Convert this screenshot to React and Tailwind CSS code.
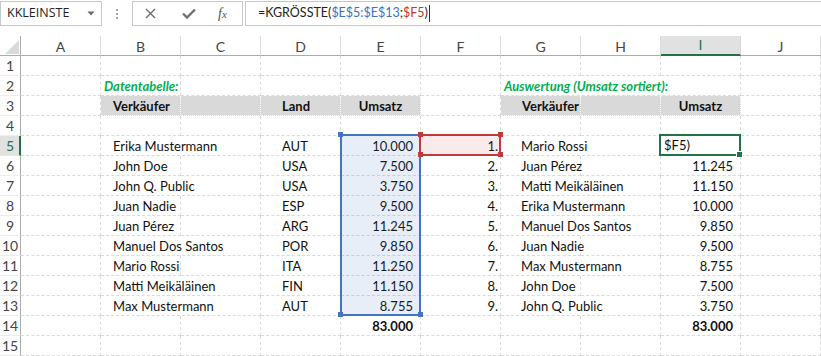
import React from "react";

const COLS = ["A", "B", "C", "D", "E", "F", "G", "H", "I", "J"];

const left = [
  ["Erika Mustermann", true, "AUT", "10.000"],
  ["John Doe", false, "USA", "7.500"],
  ["John Q. Public", true, "USA", "3.750"],
  ["Juan Nadie", false, "ESP", "9.500"],
  ["Juan Pérez", false, "ARG", "11.245"],
  ["Manuel Dos Santos", true, "POR", "9.850"],
  ["Mario Rossi", false, "ITA", "11.250"],
  ["Matti Meikäläinen", true, "FIN", "11.150"],
  ["Max Mustermann", true, "AUT", "8.755"],
];

const right = [
  ["Mario Rossi", true, null],
  ["Juan Pérez", false, "11.245"],
  ["Matti Meikäläinen", true, "11.150"],
  ["Erika Mustermann", true, "10.000"],
  ["Manuel Dos Santos", true, "9.850"],
  ["Juan Nadie", false, "9.500"],
  ["Max Mustermann", true, "8.755"],
  ["John Doe", false, "7.500"],
  ["John Q. Public", true, "3.750"],
];

function buildRows() {
  const rows = [];
  const empty = () => COLS.map(() => ({}));
  rows.push(empty());
  rows.push([
    {},
    { t: "Datentabelle:", cls: "pl-[3px] font-bold italic text-[#00b050]" },
    {},
    {},
    {},
    {},
    { t: "Auswertung (Umsatz sortiert):", span: 3, cls: "pl-[3px] font-bold italic text-[#00b050]" },
    { skip: true },
    { skip: true },
    {},
  ]);
  {
    const f = "bg-[#d9d9d9] font-bold";
    rows.push([
      {},
      { t: "Verkäufer", fill: true, cls: f + " pl-[12px]" },
      { fill: true, cls: f },
      { t: "Land", fill: true, cls: f + " pl-[21px]" },
      { t: "Umsatz", fill: true, cls: f + " justify-center" },
      {},
      { t: "Verkäufer", fill: true, cls: f + " pl-[21px]" },
      { fill: true, cls: f },
      { t: "Umsatz", fill: true, cls: f + " justify-center" },
      {},
    ]);
  }
  rows.push(empty());
  for (let i = 0; i < 9; i++) {
    const [n, sp, land, ums] = left[i];
    const [rn, rsp, rums] = right[i];
    const r = [];
    r.push({});
    if (sp) {
      r.push({ t: n, span: 2, cls: "pl-[12px]" });
      r.push({ skip: true });
    } else {
      r.push({ t: n, cls: "pl-[12px]" });
      r.push({});
    }
    r.push({ t: land, cls: "pl-[21px]" });
    r.push({ t: ums, cls: "justify-end pr-[7px]" });
    r.push({ t: i + 1 + ".", cls: "justify-end pr-[2px]" });
    if (rsp) {
      r.push({ t: rn, span: 2, cls: "pl-[20px]" });
      r.push({ skip: true });
    } else {
      r.push({ t: rn, cls: "pl-[20px]" });
      r.push({});
    }
    r.push(rums ? { t: rums, cls: "justify-end pr-[7px]" } : {});
    r.push({});
    rows.push(r);
  }
  {
    const r = empty();
    r[4] = { t: "83.000", cls: "justify-end pr-[7px] font-bold" };
    r[8] = { t: "83.000", cls: "justify-end pr-[7px] font-bold" };
    rows.push(r);
  }
  rows.push(empty());
  return rows;
}

const spanCls = { 1: "", 2: "col-span-2", 3: "col-span-3" };

function Handle({ className }) {
  return <div className={"absolute w-[5px] h-[5px] " + className} />;
}

export default function App() {
  const rows = buildRows();
  return (
    <div className="w-[821px] h-[356px] bg-white overflow-hidden font-['Lato','Liberation_Sans',sans-serif] text-[13px] text-[#111]">
      {/* Formula bar */}
      <div className="h-9 flex items-start pt-px">
        <div className="w-[102px] h-[25px] border border-[#c6c6c6] flex items-center pl-[6px] pr-[6px] text-[12.5px] font-['Open_Sans',sans-serif] text-[#222]">
          <span>KKLEINSTE</span>
          <svg className="ml-auto" width="8" height="5" viewBox="0 0 8 5">
            <path d="M0.5 0.5 L7.5 0.5 L4 4.5 Z" fill="#6b6b6b" />
          </svg>
        </div>
        <div className="w-[30px] h-[25px] flex flex-col items-center justify-center gap-[2px]">
          <div className="w-[2px] h-[2px] bg-[#a6a6a6]" />
          <div className="w-[2px] h-[2px] bg-[#a6a6a6]" />
          <div className="w-[2px] h-[2px] bg-[#a6a6a6]" />
        </div>
        <div className="w-[111px] h-[25px] border border-[#c6c6c6] flex items-center pl-[12px]">
          <svg width="11" height="11" viewBox="0 0 11 11">
            <path d="M1 1 L10 10 M10 1 L1 10" stroke="#6f6f6f" strokeWidth="1.4" />
          </svg>
          <svg className="ml-[26px]" width="14" height="11" viewBox="0 0 14 11">
            <path d="M1 5.5 L5 9.5 L13 1.5" stroke="#6f6f6f" strokeWidth="2.4" fill="none" />
          </svg>
          <div className="ml-[22px] flex font-['Liberation_Serif',serif] italic text-[14px] text-[#555]">
            <span>f</span>
            <span className="text-[11px] mt-[3px]">x</span>
          </div>
        </div>
        <div className="ml-[2px] flex-1 h-[25px] border border-r-0 border-[#c6c6c6] flex items-center pl-[12px] text-[12.5px]">
          <span className="text-[#222]">=KGRÖSSTE(</span>
          <span className="text-[#3d6fc4]">$E$5:$E$13</span>
          <span className="text-[#222]">;</span>
          <span className="text-[#c0392b]">$F5</span>
          <span className="text-[#222]">)</span>
          <div className="w-px h-[17px] bg-[#333] ml-[1px]" />
        </div>
      </div>

      {/* Grid */}
      <div className="relative">
        <div className="grid grid-cols-[21px_repeat(10,80px)] text-[13px]">
          <div className="h-5 border-r border-b border-[#ababab] relative">
            <svg className="absolute left-[5px] top-[4px]" width="14" height="14" viewBox="0 0 14 14">
              <path d="M14 0 L14 14 L0 14 Z" fill="#dadada" />
            </svg>
          </div>
          {COLS.map((c) =>
            c === "I" ? (
              <div key={c} className="h-5 bg-[#e1e1e1] border-r border-r-[#d5d5d5] border-b-2 border-b-[#217346] flex items-center justify-center text-[#217346] text-[14px] pb-px">
                {c}
              </div>
            ) : (
              <div key={c} className="h-5 border-r border-r-[#dcdcdc] border-b border-b-[#ababab] flex items-center justify-center text-[#444] text-[14px] pt-px">
                {c}
              </div>
            )
          )}
          {rows.map((r, ri) => {
            const num = ri + 1;
            const out = [];
            out.push(
              num === 5 ? (
                <div key={"h" + ri} className="h-5 bg-[#e1e1e1] border-r-2 border-r-[#217346] border-b border-b-[#e6e6e6] flex items-center justify-center text-[#217346] text-[14px] pl-px">
                  {num}
                </div>
              ) : (
                <div key={"h" + ri} className="h-5 border-r border-r-[#ababab] border-b border-b-[#ececec] flex items-center justify-center text-[#444] text-[14px]">
                  {num}
                </div>
              )
            );
            r.forEach((cell, ci) => {
              if (cell.skip) return;
              const span = cell.span || 1;
              const borders = cell.fill
                ? "border-r border-b border-dotted border-white"
                : "border-r border-b border-dashed border-[#d9d9d9]";
              out.push(
                <div
                  key={ri + "-" + ci}
                  className={
                    "h-5 flex items-center whitespace-nowrap overflow-visible pt-[2px] " +
                    borders +
                    " " +
                    spanCls[span] +
                    " " +
                    (cell.cls || "")
                  }
                >
                  {cell.t}
                </div>
              );
            });
            return out;
          })}
        </div>

        {/* Blue range E5:E13 */}
        <div className="absolute left-[340px] top-[98px] w-[81px] h-[182px] border-2 border-[#4472c4] bg-[#4472c4]/12" />
        <Handle className="left-[338px] top-[96px] bg-[#4472c4]" />
        <Handle className="left-[338px] top-[276px] bg-[#4472c4]" />
        <Handle className="left-[418px] top-[276px] bg-[#4472c4]" />

        {/* Red range F5 */}
        <div className="absolute left-[419px] top-[98px] w-[82px] h-[22px] border-2 border-[#c0393b] bg-[#c0393b]/10" />
        <Handle className="left-[418px] top-[96px] bg-[#c0393b]" />
        <Handle className="left-[498px] top-[96px] bg-[#c0393b]" />
        <Handle className="left-[418px] top-[116px] bg-[#c0393b]" />
        <Handle className="left-[498px] top-[116px] bg-[#c0393b]" />

        {/* Active cell I5 */}
        <div className="absolute left-[659px] top-[98px] w-[82px] h-[22px] border-2 border-[#217346] bg-white flex items-center pl-[3px] pt-[2px]">
          $F5)
        </div>
        <div className="absolute left-[736px] top-[115px] w-[7px] h-[7px] bg-[#217346] border border-white" />
      </div>
    </div>
  );
}
